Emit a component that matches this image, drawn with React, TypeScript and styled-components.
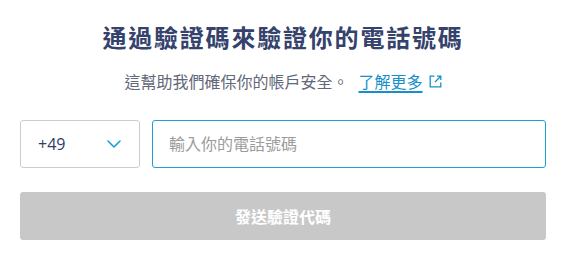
import React from "react";
import styled, { createGlobalStyle } from "styled-components";

const Global = createGlobalStyle`
  html, body { margin: 0; padding: 0; background: #ffffff; }
  body { font-family: "Open Sans", "Noto Sans CJK TC", sans-serif; }
  * { box-sizing: border-box; }
`;

const Page = styled.div`
  width: 561px;
  padding: 22px 15px 0 20px;
  display: flex;
  flex-direction: column;
`;

const Title = styled.h1`
  margin: 0;
  font-family: "Open Sans", "Noto Sans CJK TC", sans-serif;
  font-size: 24px;
  line-height: 32px;
  font-weight: 700;
  letter-spacing: 1.8px;
  color: #34426c;
  text-align: center;
`;

const Subtitle = styled.p`
  margin: 16px 0 0;
  font-size: 16px;
  line-height: 24px;
  letter-spacing: 0;
  color: #636878;
  text-align: center;
  display: flex;
  justify-content: center;
  align-items: center;
`;

const Link = styled.a`
  margin-left: 10px;
  color: #1590c8;
  text-decoration: none;
  display: inline-flex;
  align-items: center;
  gap: 6px;
`;

const LinkText = styled.span`
  text-decoration: underline;
  text-decoration-thickness: 1.5px;
  text-underline-offset: 3px;
`;

const IconWrap = styled.span`
  display: inline-flex;
  width: 13px;
  height: 13px;
  margin-top: -2px;
`;

const Row = styled.div`
  margin-top: 26px;
  display: flex;
  gap: 12px;
  height: 48px;
`;

const Select = styled.div`
  width: 120px;
  height: 48px;
  border: 1px solid #cdcdcd;
  border-radius: 3px;
  display: flex;
  align-items: center;
  justify-content: space-between;
  padding: 0 18px 0 17px;
  font-size: 16px;
  color: #2f3d68;
`;

const Input = styled.input`
  flex: 1;
  height: 48px;
  border: 1px solid #1aa0d8;
  border-radius: 3px;
  padding: 0 16px;
  font-family: "Open Sans", "Noto Sans CJK TC", sans-serif;
  font-size: 16px;
  color: #2f3d68;
  caret-color: #2f3d68;
  outline: none;
  &::placeholder {
    color: #9c9c9c;
  }
`;

const Button = styled.button`
  margin-top: 24px;
  height: 48px;
  width: 100%;
  border: none;
  border-radius: 3px;
  background: #c8c8c8;
  color: #ffffff;
  font-family: "Open Sans", "Noto Sans CJK TC", sans-serif;
  font-size: 16px;
  font-weight: 700;
  cursor: default;
`;

const Chevron = () => (
  <svg width="14" height="8" viewBox="0 0 14 8" fill="none">
    <path d="M1 1l6 6 6-6" stroke="#1a9fd5" strokeWidth="1.6" strokeLinecap="round" strokeLinejoin="round" />
  </svg>
);

const ExternalIcon = () => (
  <svg width="13" height="13" viewBox="0 0 13 13" fill="none">
    <path d="M5.5 1.2H1.2v10.6h10.6V7.5" stroke="#1590c8" strokeWidth="1.3" />
    <path d="M8 1.2h3.8V5M11.8 1.2L6 7" stroke="#1590c8" strokeWidth="1.3" />
  </svg>
);

export default function App() {
  return (
    <>
      <Global />
      <Page>
        <Title>通過驗證碼來驗證你的電話號碼</Title>
        <Subtitle>
          這幫助我們確保你的帳戶安全。
          <Link href="#">
            <LinkText>了解更多</LinkText>
            <IconWrap>
              <ExternalIcon />
            </IconWrap>
          </Link>
        </Subtitle>
        <Row>
          <Select>
            <span>+49</span>
            <Chevron />
          </Select>
          <Input autoFocus placeholder="輸入你的電話號碼" />
        </Row>
        <Button>發送驗證代碼</Button>
      </Page>
    </>
  );
}
